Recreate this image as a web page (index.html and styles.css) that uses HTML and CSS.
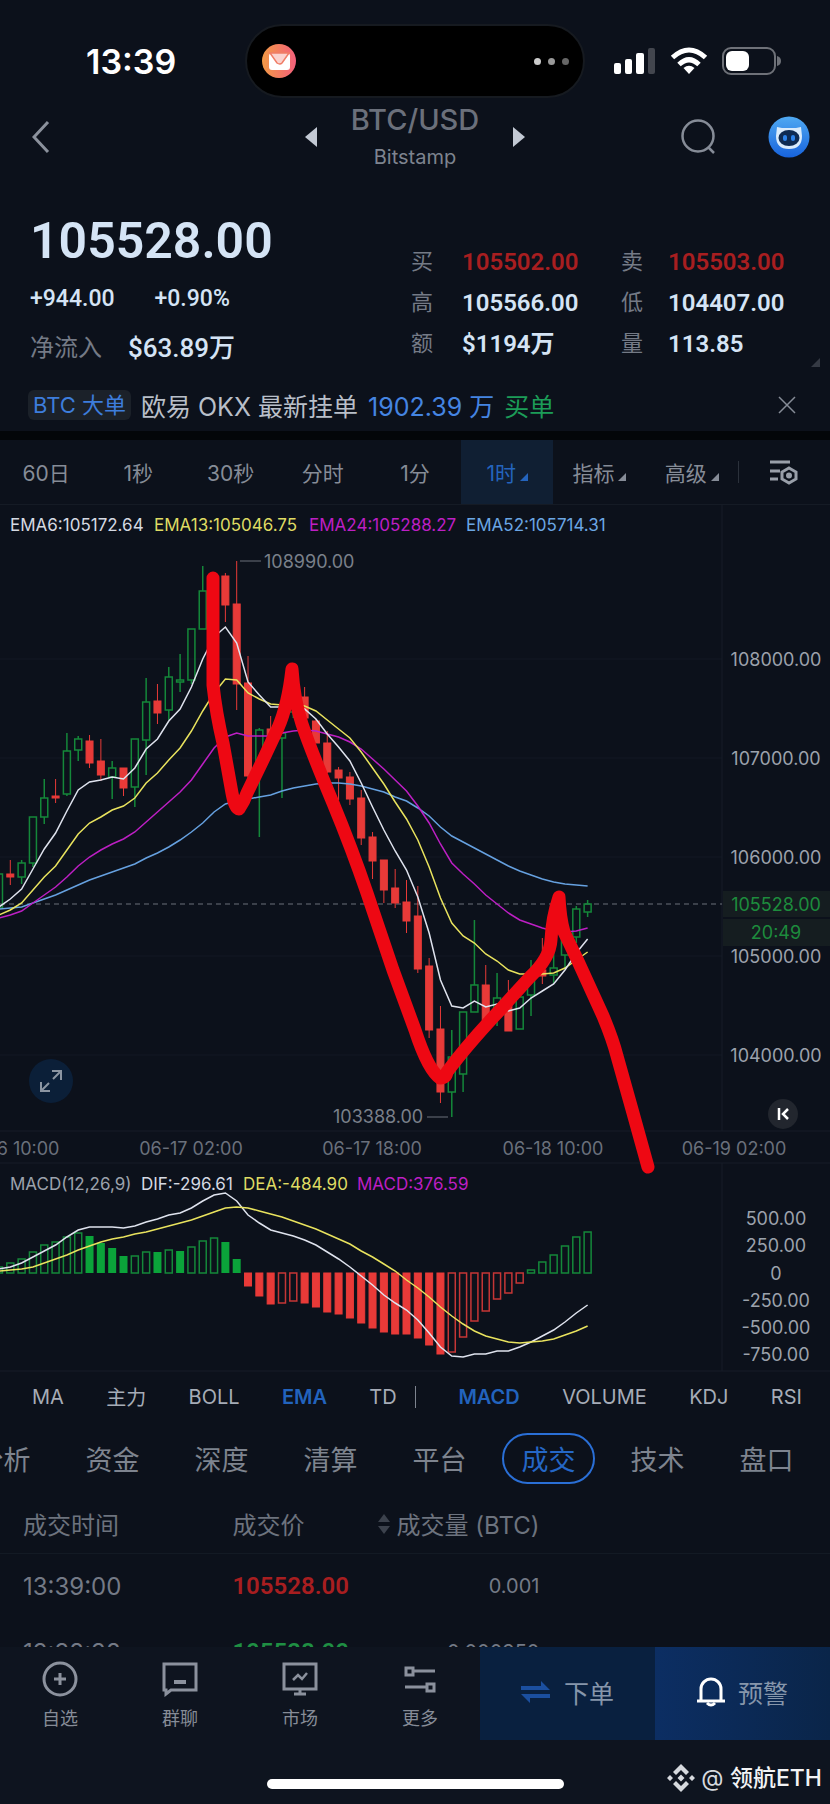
FILE: index.html
```html
<!DOCTYPE html>
<html lang="zh-CN">
<head>
  <meta charset="UTF-8">
  <meta name="viewport" content="width=device-width, initial-scale=1.0">
  <title>BTC/USD</title>
  <link rel="stylesheet" href="styles.css">
</head>
<body>
  <div class="status-bar">
    <span class="clock">13:39</span>
    <div class="island">
      <svg width="36" height="36" viewBox="0 0 36 36">
        <defs>
          <linearGradient id="mail-bg"><stop offset="0" stop-color="#f29a45"/><stop offset="1" stop-color="#f4607c"/></linearGradient>
        </defs>
        <circle cx="18" cy="18" r="17" fill="url(#mail-bg)"/>
        <rect x="8" y="10" width="21" height="17" rx="3" fill="#fff"/>
        <path d="M9 10h19l-7 10q-2 2-5 0z" fill="#fbd3cf" stroke="#f07d66" stroke-width="1.5"/>
      </svg>
      <span class="dots"><i></i><i></i><i></i></span>
    </div>
    <div class="signals">
      <svg width="42" height="28" viewBox="0 0 42 28" fill="#fff">
        <rect x="0" y="16" width="7" height="11" rx="2"/>
        <rect x="11" y="12" width="7" height="15" rx="2"/>
        <rect x="22" y="6" width="8" height="21" rx="2"/>
        <rect x="34" y="1" width="7" height="26" rx="2" fill="#43464e"/>
      </svg>
      <svg width="38" height="28" viewBox="0 0 38 28" fill="none" stroke="#fff" stroke-width="5">
        <path d="M2.500 10.500Q19-4.500 35.500 10.500"/>
        <path d="M9 17.500Q19 8 29 17.500"/>
        <path d="M19 27l-5.500-6q5.500-4.500 11 0z" fill="#fff" stroke="none"/>
      </svg>
      <svg width="60" height="28" viewBox="0 0 60 28">
        <rect x="1" y="1" width="52" height="26" rx="8" fill="none" stroke="#6e7178" stroke-width="2"/>
        <rect x="4" y="4" width="23" height="20" rx="6" fill="#fff"/>
        <path d="M55 9q4 1 4 5t-4 5z" fill="#6e7178"/>
      </svg>
    </div>
  </div>

  <header class="top">
    <button class="icon-btn back" aria-label="返回">
      <svg width="18" height="34" viewBox="0 0 18 34" fill="none" stroke="#8b919c" stroke-width="3"><path d="M16 2L2 17l14 15"/></svg>
    </button>
    <div class="pair">
      <button class="icon-btn" aria-label="上一个">
        <svg width="12" height="20" viewBox="0 0 12 20" fill="#c3c9d4"><path d="M12 0v20L0 10z"/></svg>
      </button>
      <div class="pair-name">
        <h1>BTC/USD</h1>
        <p>Bitstamp</p>
      </div>
      <button class="icon-btn" aria-label="下一个">
        <svg width="12" height="20" viewBox="0 0 12 20" fill="#c3c9d4"><path d="M0 0v20l12-10z"/></svg>
      </button>
    </div>
    <div class="top-tools">
      <button class="icon-btn" aria-label="搜索">
        <svg width="38" height="38" viewBox="0 0 38 38" fill="none" stroke="#868c97" stroke-width="2.500"><circle cx="18" cy="18" r="15.500"/><path d="M28 29l6 6"/></svg>
      </button>
      <button class="icon-btn" aria-label="助手">
        <svg width="42" height="42" viewBox="0 0 42 42">
          <defs>
            <linearGradient id="bot-bg" x1="0" y1="0" x2="0" y2="1"><stop offset="0" stop-color="#4fa9f2"/><stop offset="1" stop-color="#1763dd"/></linearGradient>
          </defs>
          <circle cx="21" cy="21" r="20.500" fill="url(#bot-bg)"/>
          <path d="M9 11l5 1h14l5-1 1 9q0 13-13 13T8 20z" fill="#d9ebfb"/>
          <ellipse cx="21" cy="22" rx="10.500" ry="8" fill="#0e2b52"/>
          <rect x="15" y="19" width="4" height="6" rx="2" fill="#2c83ea"/>
          <rect x="23" y="19" width="4" height="6" rx="2" fill="#2c83ea"/>
        </svg>
      </button>
    </div>
  </header>

  <section class="quote">
    <div class="quote-main">
      <strong class="price">105528.00</strong>
      <div class="change"><span>+944.00</span><span>+0.90%</span></div>
      <div class="inflow"><span class="label">净流入</span><b>$63.89万</b></div>
    </div>
    <dl class="quote-grid">
      <dt>买</dt><dd class="red">105502.00</dd><dt>卖</dt><dd class="red">105503.00</dd>
      <dt>高</dt><dd>105566.00</dd><dt>低</dt><dd>104407.00</dd>
      <dt>额</dt><dd>$1194万</dd><dt>量</dt><dd>113.85</dd>
    </dl>
    <i class="corner"></i>
  </section>

  <div class="notice">
    <span class="tag">BTC 大单</span>
    <span>欧易 OKX 最新挂单</span>
    <span class="amount">1902.39 万</span>
    <span class="buy">买单</span>
    <button class="icon-btn close" aria-label="关闭">
      <svg width="18" height="18" viewBox="0 0 18 18" stroke="#868c97" stroke-width="1.500"><path d="M1 1l16 16M17 1L1 17"/></svg>
    </button>
  </div>

  <nav class="periods">
    <button>60日</button>
    <button>1秒</button>
    <button>30秒</button>
    <button>分时</button>
    <button>1分</button>
    <button class="active">1时<i class="tri"></i></button>
    <button>指标<i class="tri"></i></button>
    <button>高级<i class="tri"></i></button>
    <button class="settings" aria-label="设置">
      <svg width="28" height="26" viewBox="0 0 28 26" fill="none" stroke="#999fa9" stroke-width="3">
        <path d="M0 3h20M0 12h10M0 20h8"/>
        <path d="M19 9l7 4v7l-7 4-7-4v-7z"/>
        <circle cx="19" cy="16.500" r="1.500"/>
      </svg>
    </button>
  </nav>

  <main class="chart">
    <svg id="chart" class="chart-svg" viewBox="0 505 830 867">
      <g class="grid">
        <path d="M0 659H722M0 758H722M0 857H722M0 956H722M0 1055H722"/>
        <path class="frame" d="M0 1131H830M0 1163H830M0 1371H830M722 505V1131M722 1163V1371"/>
      </g>
      <path class="last-price" d="M0 904H722"/>
      <g id="candles"></g>
      <g id="lines"></g>
      <g id="macd"></g>
      <g id="macd-lines"></g>

      <path class="brush" d="M213 578V685Q216 713 223 743L232 793Q235 809 239 809Q244 802 247 793L263 760L278 728Q288 705 292 669Q294 700 302 724Q310 748 333 803Q352 849 367 893L393 970L415 1030Q428 1070 440 1078Q446 1078 447 1072Q467 1045 500 1010L530 977Q550 958 551 940Q552 918 559 897Q560 918 564 932L577 959L603 1016Q613 1040 617 1056L633 1113L648 1167"/>

      <g class="text legend">
        <text x="10" y="531" class="c-white">EMA6:105172.64</text>
        <text x="154" y="531" class="c-yellow">EMA13:105046.75</text>
        <text x="309" y="531" class="c-pink">EMA24:105288.27</text>
        <text x="466" y="531" class="c-blue">EMA52:105714.31</text>
        <text x="10" y="1190">MACD(12,26,9)</text>
        <text x="141" y="1190" class="c-white">DIF:-296.61</text>
        <text x="243" y="1190" class="c-yellow">DEA:-484.90</text>
        <text x="357" y="1190" class="c-pink">MACD:376.59</text>
      </g>
      <g class="text">
        <path d="M240 561H261M427 1117H448" class="leader"/>
        <text x="264" y="568" class="c-dim">108990.00</text>
        <text x="333" y="1123" class="c-dim">103388.00</text>
      </g>
      <g class="text axis">
        <text x="776" y="666">108000.00</text>
        <text x="776" y="765">107000.00</text>
        <text x="776" y="864">106000.00</text>
        <text x="776" y="963">105000.00</text>
        <text x="776" y="1062">104000.00</text>
        <rect x="723" y="891" width="107" height="26"/>
        <rect x="723" y="919" width="107" height="27"/>
        <text x="776" y="911" class="c-green">105528.00</text>
        <text x="776" y="939" class="c-green">20:49</text>
        <text x="776" y="1225">500.00</text>
        <text x="776" y="1252">250.00</text>
        <text x="776" y="1280">0</text>
        <text x="776" y="1307">-250.00</text>
        <text x="776" y="1334">-500.00</text>
        <text x="776" y="1361">-750.00</text>
      </g>
      <g class="text dates">
        <text x="9" y="1155">06-16 10:00</text>
        <text x="191" y="1155">06-17 02:00</text>
        <text x="372" y="1155">06-17 18:00</text>
        <text x="553" y="1155">06-18 10:00</text>
        <text x="734" y="1155">06-19 02:00</text>
      </g>
    </svg>
    <button class="round expand" aria-label="全屏">
      <svg width="24" height="24" viewBox="0 0 24 24" fill="none" stroke="#8b95a2" stroke-width="2"><path d="M13 2h9v9M22 2l-8 8M2 13v9h9M2 22l8-8"/></svg>
    </button>
    <button class="round latest" aria-label="最新">
      <svg width="12" height="14" viewBox="0 0 12 14" fill="none" stroke="#fff" stroke-width="2.500"><path d="M2 1v12M11 2L6 7l5 5"/></svg>
    </button>
  </main>

  <nav class="indicators">
    <button>MA</button>
    <button>主力</button>
    <button>BOLL</button>
    <button class="active">EMA</button>
    <button>TD</button>
    <i class="divider"></i>
    <button class="active">MACD</button>
    <button>VOLUME</button>
    <button>KDJ</button>
    <button>RSI</button>
  </nav>

  <nav class="tabs">
    <button>分析</button>
    <button>资金</button>
    <button>深度</button>
    <button>清算</button>
    <button>平台</button>
    <button class="active">成交</button>
    <button>技术</button>
    <button>盘口</button>
  </nav>

  <section class="trades">
    <table>
      <thead>
        <tr>
          <th>成交时间</th>
          <th>成交价</th>
          <th class="num">
            <svg width="12" height="20" viewBox="0 0 12 20" fill="#3c424d"><path d="M6 0l6 8H0zM6 20l6-8H0z"/></svg>
            成交量 (BTC)
          </th>
          <th></th>
        </tr>
      </thead>
      <tbody>
        <tr><td>13:39:00</td><td class="deal red">105528.00</td><td class="num">0.001</td><td></td></tr>
        <tr><td>13:38:38</td><td class="deal green">105528.00</td><td class="num">0.000950</td><td></td></tr>
      </tbody>
    </table>
  </section>

  <footer class="bottom">
    <div class="bottom-row">
      <button class="item">
        <svg width="36" height="36" viewBox="0 0 36 36" fill="none" stroke="#8b919d" stroke-width="3"><circle cx="18" cy="18" r="16"/><path d="M18 12v12M12 18h12"/></svg>
        自选
      </button>
      <button class="item">
        <svg width="36" height="36" viewBox="0 0 36 36" fill="none" stroke="#8b919d" stroke-width="3"><path d="M2 3h32v26H9l-5 4v-4H2z"/><path d="M12 21h12" stroke-width="4"/></svg>
        群聊
      </button>
      <button class="item">
        <svg width="36" height="36" viewBox="0 0 36 36" fill="none" stroke="#8b919d" stroke-width="3"><path d="M2 3h32v25H2zM18 28v6M12 33h12"/><path d="M11 19l5-5 4 4 5-6" stroke-width="2.500"/></svg>
        市场
      </button>
      <button class="item">
        <svg width="36" height="36" viewBox="0 0 36 36" fill="none" stroke="#8b919d" stroke-width="3"><path d="M4 7h7v7H4zM11 10h22M25 23h7v7h-7zM25 26H3"/></svg>
        更多
      </button>
      <button class="order">
        <svg width="30" height="24" viewBox="0 0 30 24" fill="#1b4f9f"><path d="M0 6h20V1l9 9H0zM29 18H9v5L0 14h29z"/></svg>
        下单
      </button>
      <button class="alert">
        <svg width="28" height="30" viewBox="0 0 28 30" fill="none" stroke="#fff" stroke-width="3"><path d="M0 24h28M4 24V12a10 10 0 0 1 20 0v12"/><path d="M10 26q4 4 8 0"/></svg>
        预警
      </button>
    </div>
    <div class="home-row">
      <span class="home-bar"></span>
      <span class="watermark">
        <svg width="28" height="28" viewBox="0 0 28 28" fill="#d6d9de">
          <path d="M14 0l8 8-3 3-5-5-5 5-3-3zM14 28l8-8-3-3-5 5-5-5-3 3zM3 11l3 3-3 3-3-3zM25 11l3 3-3 3-3-3zM14 10.500l3.500 3.500-3.500 3.500-3.500-3.500z"/>
        </svg>
        <span>@ <b>领航ETH</b></span>
      </span>
    </div>
  </footer>

  <script src="chart.js"></script>
</body>
</html>
```
FILE: styles.css
```css
* {
  box-sizing: border-box;
}
body {
  margin: 0;
  height: 100vh;
  display: flex;
  flex-direction: column;
  overflow: hidden;
  background-color: #0c111b;
  color: #868c97;
  font-family: Inter, "Noto Sans CJK SC", sans-serif;
  font-size: 22px;
}
button {
  background: none;
  border: none;
  padding: 0;
  color: inherit;
  font: inherit;
  cursor: pointer;
  white-space: nowrap;
}
svg {
  display: block;
  flex: none;
}
h1, p, dl, dd {
  margin: 0;
}
.icon-btn {
  display: block;
}
.red {
  color: #a81e20;
}
.green {
  color: #1f8f43;
}

/* status bar */
.status-bar {
  display: grid;
  grid-template-columns: 1fr 340px 1fr;
  align-items: center;
  height: 98px;
  padding-top: 24px;
  flex: none;
}
.clock {
  padding-left: 86px;
  color: #fff;
  font-size: 34px;
  font-weight: 600;
}
.island {
  display: flex;
  align-items: center;
  justify-content: space-between;
  height: 74px;
  padding: 0 14px;
  background: #000;
  border: 2px solid #161a20;
  border-radius: 37px;
}
.dots {
  display: flex;
  gap: 7px;
}
.dots i {
  width: 7px;
  height: 7px;
  border-radius: 50%;
  background: #ccc;
}
.dots i:nth-child(2) {
  background: #999;
}
.dots i:nth-child(3) {
  background: #666;
}
.signals {
  display: flex;
  align-items: center;
  gap: 14px;
  padding-left: 29px;
}

/* header */
.top {
  display: grid;
  grid-template-columns: 1fr 220px 1fr;
  align-items: center;
  height: 78px;
  flex: none;
}
.back {
  margin-left: 32px;
}
.pair {
  display: flex;
  align-items: center;
  justify-content: space-between;
}
.pair-name {
  padding-top: 4px;
  text-align: center;
}
.pair-name h1 {
  font-size: 29px;
  line-height: 36px;
  font-weight: 500;
  color: #6b707b;
}
.pair-name p {
  font-size: 20px;
  line-height: 38px;
  color: #7e848f;
}
.top-tools {
  display: flex;
  align-items: center;
  justify-content: flex-end;
  gap: 50px;
  padding-right: 20px;
}

/* quote */
.quote {
  position: relative;
  display: flex;
  justify-content: space-between;
  align-items: flex-end;
  height: 207px;
  padding: 0 46px 14px 30px;
  flex: none;
  font-family: Roboto, "Noto Sans CJK SC", sans-serif;
  color: #d5e4f5;
}
.price {
  display: block;
  font-size: 50px;
  line-height: 60px;
  font-weight: 600;
}
.change {
  display: flex;
  gap: 40px;
  margin-top: 8px;
  font-size: 23px;
  line-height: 40px;
  font-weight: 500;
}
.inflow {
  display: flex;
  gap: 26px;
  margin-top: 8px;
  font-size: 24px;
  line-height: 42px;
}
.inflow b {
  font-size: 26px;
  font-weight: 500;
}
.label,
.quote-grid dt {
  color: #747a86;
}
.quote-grid {
  display: grid;
  grid-template-columns: 51px 159px 47px 116px;
  grid-auto-rows: 41px;
  align-items: center;
  padding-bottom: 5px;
  line-height: 40px;
}
.quote-grid dd {
  font-size: 24px;
  font-weight: 600;
}
.corner {
  position: absolute;
  right: 10px;
  bottom: 16px;
  border-top: 9px solid transparent;
  border-right: 9px solid #353a44;
}

/* big order notice */
.notice {
  display: flex;
  align-items: center;
  gap: 10px;
  height: 57px;
  padding: 0 34px 4px 28px;
  border-bottom: 9px solid #030609;
  flex: none;
  font-size: 25px;
  color: #b9bfc9;
}
.tag {
  padding: 0 5px;
  border-radius: 6px;
  background: #1b2129;
  color: #3d7ddb;
  font-size: 22px;
  line-height: 30px;
}
.amount {
  color: #4585e2;
}
.buy {
  color: #1c9c58;
}
.close {
  margin-left: auto;
}

/* period switch */
.periods {
  display: grid;
  grid-template-columns: repeat(9, 1fr);
  height: 65px;
  border-bottom: 1px solid #151b25;
  flex: none;
  font-size: 21px;
}
.periods .active {
  background: #101f33;
  color: #2464bd;
}
.tri {
  display: inline-block;
  margin-left: 4px;
  border-top: 8px solid transparent;
  border-right: 8px solid currentColor;
}
.settings {
  display: flex;
  align-items: center;
  justify-content: center;
  background: linear-gradient(#2b313b, #2b313b) left center / 1px 22px no-repeat;
}

/* chart */
.chart {
  position: relative;
  flex: none;
}
.chart-svg {
  width: 100%;
  height: auto;
}
.grid path {
  fill: none;
  stroke: #121924;
}
.grid .frame {
  stroke: #161d28;
}
.last-price {
  stroke: #6b717b;
  stroke-dasharray: 5 4;
}
.leader {
  stroke: #6b717b;
}
.up {
  fill: none;
  stroke: #14883a;
  stroke-width: 1.5;
}
.up-solid {
  fill: #0ba33a;
}
.down {
  fill: #e83a38;
  stroke: #e83a38;
}
.down-hollow {
  fill: none;
  stroke: #c53636;
  stroke-width: 1.5;
}
.line {
  fill: none;
  stroke-width: 1.5;
}
.line.white {
  stroke: #dfe3ee;
}
.line.yellow {
  stroke: #e9e35e;
}
.line.pink {
  stroke: #bd1fc4;
}
.line.blue {
  stroke: #66a1e0;
}
.brush {
  fill: none;
  stroke: #ee0813;
  stroke-width: 13;
  stroke-linecap: round;
  stroke-linejoin: round;
}
.text {
  font-size: 18px;
  fill: #9ca2ac;
}
.legend {
  font-size: 17px;
}
.axis {
  text-anchor: middle;
}
.axis rect {
  fill: #151d20;
}
.dates {
  text-anchor: middle;
  fill: #6a707b;
}
.c-white {
  fill: #d5d9e2;
}
.c-yellow {
  fill: #dfdb63;
}
.c-pink {
  fill: #bd1fc4;
}
.c-blue {
  fill: #6ba6e4;
}
.c-dim {
  fill: #7a808a;
}
.c-green {
  fill: #1d8c3d;
}
.round {
  position: absolute;
  display: flex;
  align-items: center;
  justify-content: center;
  border-radius: 50%;
}
.expand {
  left: 29px;
  bottom: 269px;
  width: 44px;
  height: 44px;
  background: #0b1f38;
}
.latest {
  right: 32px;
  bottom: 243px;
  width: 30px;
  height: 30px;
  background: #22262e;
}

/* indicators */
.indicators {
  display: flex;
  align-items: center;
  justify-content: space-between;
  height: 49px;
  padding: 0 28px 0 32px;
  flex: none;
  font-size: 20px;
  color: #a6acb7;
}
.indicators .active {
  color: #2263bd;
  font-weight: 600;
}
.divider {
  width: 1px;
  height: 22px;
  margin-left: -24px;
  background: #7e848f;
}

/* tabs */
.tabs {
  display: flex;
  align-items: center;
  height: 74px;
  margin-left: -51px;
  flex: none;
  font-size: 27px;
  color: #7e848f;
}
.tabs button {
  flex: 0 0 109px;
  height: 51px;
}
.tabs .active {
  flex-basis: 93px;
  margin: 0 8px;
  border: 2px solid #2a6fd6;
  border-radius: 26px;
  color: #2567c6;
}

/* trades */
.trades {
  flex: 1;
  min-height: 0;
  overflow: hidden;
}
.trades table {
  width: 100%;
  table-layout: fixed;
  border-collapse: collapse;
  font-size: 24px;
}
.trades th,
.trades td {
  height: 66px;
  padding: 0;
  text-align: left;
  font-weight: 400;
  color: #747a86;
}
.trades th {
  height: 58px;
  border-bottom: 1px solid #131a24;
  color: #6d737e;
}
.trades th:nth-child(1) {
  width: 28%;
}
.trades th:nth-child(2) {
  width: 17%;
}
.trades th:nth-child(3) {
  width: 20%;
}
.trades th:first-child,
.trades td:first-child {
  padding-left: 23px;
}
.trades .num {
  text-align: right;
  white-space: nowrap;
}
.trades td.num {
  font-size: 20px;
}
.num svg {
  display: inline-block;
}
.trades .deal {
  font-family: Roboto, sans-serif;
  font-weight: 600;
}
.trades .deal.red {
  color: #a81e20;
}
.trades .deal.green {
  color: #1f8f43;
}

/* bottom bar */
.bottom {
  flex: none;
  background: #0e141f;
}
.bottom-row {
  display: grid;
  grid-template-columns: repeat(4, 120fr) repeat(2, 175fr);
  height: 93px;
}
.item {
  display: flex;
  flex-direction: column;
  align-items: center;
  gap: 9px;
  padding-top: 14px;
  font-size: 18px;
  line-height: 26px;
}
.order,
.alert {
  display: flex;
  align-items: center;
  justify-content: center;
  gap: 13px;
  padding-bottom: 3px;
  background: #09203f;
  color: #8696ab;
  font-size: 25px;
}
.alert {
  background: linear-gradient(90deg, #0c2e63, #0a2549);
}
.home-row {
  display: grid;
  grid-template-columns: 1fr 297px 1fr;
  align-items: center;
  height: 64px;
  padding-top: 24px;
}
.home-bar {
  grid-column: 2;
  height: 10px;
  border-radius: 5px;
  background: #fff;
}
.watermark {
  display: flex;
  align-items: center;
  align-self: start;
  justify-content: flex-end;
  gap: 6px;
  padding-right: 8px;
  font-size: 23px;
  line-height: 28px;
  color: #d6d9de;
  white-space: nowrap;
}
.watermark b {
  color: #f2f3f5;
  font-weight: 500;
}
```
FILE: chart.js
```js
const NS = "http://www.w3.org/2000/svg";
const x = i => 10.3 + 11.32 * i;

// direction, high, body top, body bottom, low
const candles = [
  ["u", 874, 874, 908, 908], ["d", 860, 874, 877, 885], ["u", 860, 863, 877, 884], ["u", 817, 817, 863, 867],
  ["u", 779, 798, 817, 824], ["d", 779, 796, 798, 803], ["u", 733, 751, 794, 796], ["u", 736, 739, 750, 761],
  ["d", 735, 741, 763, 768], ["d", 739, 761, 775, 781], ["u", 761, 768, 777, 799], ["d", 768, 768, 788, 796],
  ["u", 739, 739, 787, 807], ["u", 678, 702, 740, 775], ["d", 684, 701, 713, 724], ["u", 667, 677, 710, 720],
  ["u", 654, 680, 682, 692], ["u", 629, 629, 680, 684], ["u", 566, 591, 629, 629], ["d", 575, 580, 600, 610],
  ["d", 573, 576, 605, 622], ["d", 561, 604, 684, 710], ["d", 656, 683, 776, 780], ["u", 728, 730, 762, 837],
  ["d", 716, 729, 740, 740], ["u", 730, 733, 738, 798], ["u", 690, 700, 712, 718], ["d", 687, 697, 718, 720],
  ["d", 719, 721, 743, 743], ["d", 731, 743, 772, 773], ["d", 767, 770, 778, 800], ["d", 772, 777, 799, 805],
  ["d", 790, 798, 838, 845], ["d", 832, 837, 861, 879], ["d", 860, 860, 890, 903], ["d", 869, 888, 903, 908],
  ["d", 880, 902, 921, 933], ["d", 886, 916, 969, 973], ["d", 958, 966, 1030, 1038], ["d", 1006, 1029, 1092, 1103],
  ["u", 1030, 1057, 1092, 1117], ["u", 1012, 1012, 1074, 1092], ["u", 920, 985, 1012, 1012], ["d", 965, 985, 1020, 1022],
  ["u", 973, 998, 1013, 1026], ["d", 980, 1000, 1031, 1031], ["u", 993, 997, 1029, 1029], ["u", 960, 973, 995, 1016],
  ["d", 938, 970, 976, 984], ["u", 940, 968, 975, 983], ["u", 915, 930, 955, 968], ["u", 906, 909, 937, 943],
  ["u", 900, 904, 912, 917]
];

const ema = {
  blue: [909, 908, 907, 903, 899, 895, 890, 885, 880, 876, 872, 868, 864, 858, 853, 847, 840, 832, 823, 812, 804, 801, 799, 797, 795, 791, 788, 786, 784, 783, 783, 784, 786, 789, 792, 797, 801, 808, 816, 827, 836, 842, 848, 854, 860, 866, 871, 875, 879, 882, 884, 885, 886],
  pink: [918, 915, 911, 903, 895, 887, 877, 866, 857, 850, 844, 839, 832, 822, 812, 802, 792, 780, 764, 748, 737, 733, 736, 736, 736, 733, 731, 730, 731, 734, 737, 742, 749, 759, 769, 780, 791, 806, 823, 844, 863, 874, 884, 895, 904, 913, 920, 924, 928, 931, 932, 931, 928],
  yellow: [915, 910, 903, 890, 877, 866, 850, 834, 823, 817, 810, 806, 798, 783, 773, 760, 748, 731, 711, 693, 679, 680, 693, 699, 704, 705, 704, 706, 711, 720, 729, 738, 752, 768, 784, 802, 819, 840, 867, 898, 923, 936, 943, 954, 961, 970, 974, 974, 974, 973, 968, 960, 952],
  white: [907, 899, 889, 869, 849, 833, 811, 790, 782, 780, 777, 779, 768, 749, 739, 721, 709, 687, 659, 637, 627, 643, 682, 695, 707, 707, 704, 709, 719, 734, 747, 761, 783, 807, 830, 851, 870, 897, 933, 980, 1006, 1008, 1001, 1007, 1004, 1011, 1008, 998, 991, 984, 970, 953, 939]
};

const macdLines = {
  white: [1269, 1267, 1263, 1257, 1251, 1245, 1237, 1230, 1227, 1227, 1227, 1228, 1226, 1222, 1219, 1215, 1213, 1208, 1201, 1195, 1193, 1201, 1215, 1223, 1230, 1233, 1236, 1240, 1245, 1252, 1259, 1267, 1276, 1285, 1295, 1303, 1310, 1320, 1333, 1347, 1356, 1357, 1354, 1354, 1351, 1351, 1347, 1342, 1336, 1330, 1322, 1313, 1305],
  yellow: [1271, 1270, 1269, 1267, 1263, 1259, 1255, 1250, 1246, 1242, 1239, 1237, 1234, 1232, 1229, 1226, 1223, 1220, 1216, 1212, 1208, 1207, 1208, 1211, 1214, 1217, 1221, 1225, 1229, 1234, 1239, 1244, 1251, 1257, 1264, 1271, 1280, 1288, 1297, 1307, 1316, 1324, 1331, 1336, 1339, 1342, 1343, 1342, 1341, 1339, 1335, 1331, 1326]
};

const ZERO = 1273;
const bars = [1267, 1263, 1259, 1252, 1245, 1242, 1237, 1233, 1236, 1243, 1248, 1256, 1256, 1252, 1252, 1250, 1251, 1247, 1241, 1238, 1242, 1259, 1286, 1296, 1304, 1303, 1301, 1303, 1307, 1312, 1314, 1318, 1323, 1328, 1332, 1334, 1334, 1338, 1345, 1354, 1352, 1337, 1321, 1311, 1299, 1293, 1283, 1270, 1262, 1255, 1246, 1237, 1232];
// bars where the histogram is falling are drawn filled
const filled = [7, 8, 9, 10, 13, 15, 19, 20, 21, 22, 23, 26, 27, 28, 29, 30, 31, 32, 33, 34, 35, 36, 37, 38];

function add(parent, tag, attrs) {
  const el = document.createElementNS(NS, tag);
  for (const key in attrs) el.setAttribute(key, attrs[key]);
  document.getElementById(parent).appendChild(el);
}

function drawLines(parent, series) {
  for (const color in series) {
    const points = series[color].map((y, n) => x(n - 1) + "," + y).join(" ");
    add(parent, "polyline", { points, class: "line " + color });
  }
}

candles.forEach(([dir, high, top, bottom, low], n) => {
  const cx = x(n - 1);
  const cls = dir === "u" ? "up" : "down";
  add("candles", "path", { d: `M${cx} ${high}V${top}M${cx} ${bottom}V${low}`, class: cls });
  add("candles", "rect", { x: cx - 3.5, y: top, width: 7, height: bottom - top, class: cls });
});

bars.forEach((y, n) => {
  const up = y < ZERO;
  const solid = filled.includes(n - 1);
  const cls = up ? (solid ? "up-solid" : "up") : (solid ? "down" : "down-hollow");
  const w = solid && up ? 8 : 7;
  add("macd", "rect", { x: x(n - 1) - w / 2, y: Math.min(y, ZERO), width: w, height: Math.abs(y - ZERO), class: cls });
});

drawLines("lines", ema);
drawLines("macd-lines", macdLines);
```
